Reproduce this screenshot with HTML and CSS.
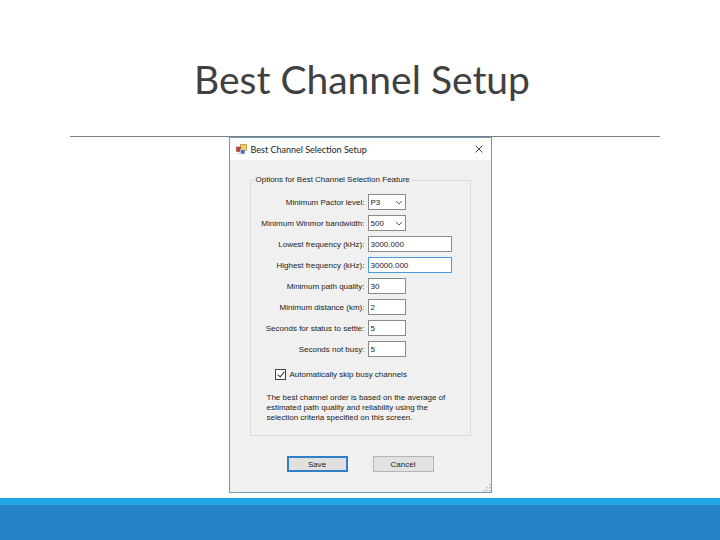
FILE: index.html
```html
<!DOCTYPE html>
<html lang="en">
<head>
  <meta charset="UTF-8" />
  <meta name="viewport" content="width=device-width, initial-scale=1.0"/>
  <title>Best Channel Setup</title>
  <link rel="stylesheet" href="styles.css">
</head>
<body>

  <header class="slide-header">
    <h1>Best Channel Setup</h1>
  </header>

  <main class="slide-body">
    <section class="window">
      <div class="title-bar">
        <svg class="app-icon" viewBox="0 0 11 11" width="11" height="11">
          <rect x="4.5" y="0.5" width="6" height="6" fill="#f5cf4c" stroke="#a98a3c" stroke-width="0.7"/>
          <rect x="0.5" y="3" width="4" height="4.5" fill="#c8432f" stroke="#8d4a48" stroke-width="0.6"/>
          <rect x="4.5" y="5.5" width="4.5" height="4.5" fill="#4f6fb5" stroke="#e4e4ee" stroke-width="0.6"/>
          <path d="M1 9.3h3" stroke="#b9b9c4" stroke-width="0.8"/>
        </svg>
        <h2>Best Channel Selection Setup</h2>
        <button type="button" class="close" aria-label="Close">
          <svg viewBox="0 0 8 8" width="8" height="8"><path d="M0.5 0.5l7 7M7.5 0.5l-7 7" stroke="#333" stroke-width="0.9"/></svg>
        </button>
      </div>

      <form class="setup-form">
        <fieldset>
          <legend>Options for Best Channel Selection Feature</legend>

          <div class="fields">
            <label for="pactor">Minimum Pactor level:</label>
            <div class="select-box">
              <select id="pactor"><option>P1</option><option>P2</option><option selected>P3</option><option>P4</option></select>
              <svg class="arrow" viewBox="0 0 8 5" width="8" height="5"><path d="M1 1l3 3 3-3" fill="none" stroke="#555" stroke-width="0.9"/></svg>
            </div>

            <label for="winmor">Minimum Winmor bandwidth:</label>
            <div class="select-box">
              <select id="winmor"><option selected>500</option><option>1600</option></select>
              <svg class="arrow" viewBox="0 0 8 5" width="8" height="5"><path d="M1 1l3 3 3-3" fill="none" stroke="#555" stroke-width="0.9"/></svg>
            </div>

            <label for="lowest">Lowest frequency (kHz):</label>
            <input type="text" id="lowest" class="wide" value="3000.000"/>

            <label for="highest">Highest frequency (kHz):</label>
            <input type="text" id="highest" class="wide active" value="30000.000"/>

            <label for="quality">Minimum path quality:</label>
            <input type="text" id="quality" value="30"/>

            <label for="distance">Minimum distance (km):</label>
            <input type="text" id="distance" value="2"/>

            <label for="settle">Seconds for status to settle:</label>
            <input type="text" id="settle" value="5"/>

            <label for="busy">Seconds not busy:</label>
            <input type="text" id="busy" value="5"/>
          </div>

          <div class="check-row">
            <input type="checkbox" id="skip" checked/>
            <label for="skip">Automatically skip busy channels</label>
          </div>

          <p class="note">The best channel order is based on the average of<br>estimated path quality and reliability using the<br>selection criteria specified on this screen.</p>
        </fieldset>

        <div class="buttons">
          <button type="submit" class="btn primary">Save</button>
          <button type="button" class="btn">Cancel</button>
        </div>
      </form>

      <svg class="grip" viewBox="0 0 8 8" width="8" height="8" fill="#b5bcc0">
        <path d="M6 0h1.5v1.5H6zM6 3h1.5v1.5H6zM6 6h1.5v1.5H6zM3 3h1.5v1.5H3zM3 6h1.5v1.5H3zM0 6h1.5v1.5H0z"/>
      </svg>
    </section>
  </main>

  <footer class="slide-footer"></footer>

</body>
</html>
```

FILE: styles.css
```css
* { box-sizing: border-box; margin: 0; padding: 0; }

body {
  min-height: 100vh;
  display: flex;
  flex-direction: column;
  background: #fff;
  font-family: 'Liberation Sans', Arial, sans-serif;
  font-size: 8px;
  color: #222;
}

/* heading */
.slide-header {
  margin: 0 60px 0 70px;
  padding: 55px 6px 33px 0;
  border-bottom: 1px solid #7f7f7f;
  text-align: center;
}
.slide-header h1 {
  font-family: Lato, Calibri, sans-serif;
  font-size: 39px;
  line-height: 48px;
  font-weight: 400;
  color: #404040;
}

.slide-body { flex: 1; }

/* dialog window */
.window {
  position: relative;
  width: 263px;
  margin: 0 auto;
  background: #f0f0f0;
  border: 1px solid #6d9cba;
}
.title-bar {
  display: flex;
  align-items: center;
  height: 22px;
  padding: 0 8px 0 6px;
  background: #fff;
}
.title-bar h2 {
  flex: 1;
  margin-left: 4px;
  font-family: Lato, 'Segoe UI', sans-serif;
  font-size: 9px;
  font-weight: 400;
}
.close { border: none; background: none; line-height: 0; }

/* form */
.setup-form { padding: 15px 20px 20px; }
fieldset {
  border: 1px solid #dcdcdc;
  padding: 9px 12px 12px 8px;
}
legend { margin-left: -4px; padding: 0 1px; line-height: 10px; }
.fields {
  display: grid;
  grid-template-columns: 106px 1fr;
  column-gap: 3px;
  row-gap: 5px;
  align-items: center;
}
.fields label { text-align: right; white-space: nowrap; }
input[type="text"], select {
  display: block;
  width: 38px;
  height: 16px;
  padding: 0 2px;
  border: 1px solid #8a8a8a;
  border-radius: 0;
  background: #fff;
  font: inherit;
  color: #222;
}
input[type="text"].wide { width: 84px; }
input[type="text"].active { border-color: #4a9ae0; }
select { appearance: none; }
.select-box { position: relative; width: 38px; }
.arrow { position: absolute; right: 3px; top: 6px; pointer-events: none; }

.check-row {
  display: flex;
  align-items: center;
  gap: 4px;
  margin: 12px 0 0 16px;
}
.check-row input {
  appearance: none;
  width: 11px;
  height: 11px;
  border: 1px solid #444;
  background: #fff;
  position: relative;
}
.check-row input:checked::after {
  content: '';
  position: absolute;
  left: 3px;
  top: 0;
  width: 3px;
  height: 6px;
  border: solid #333;
  border-width: 0 1px 1px 0;
  transform: rotate(40deg);
}
.note { margin: 13px 0 0 8px; line-height: 10px; white-space: nowrap; }

/* buttons */
.buttons { display: flex; gap: 25px; padding: 20px 0 0 37px; }
.btn {
  width: 61px;
  height: 16px;
  border: 1px solid #b5b5b5;
  background: #e1e1e1;
  font: inherit;
  color: #222;
}
.btn.primary { border: 2px solid #2f7fc6; }
.grip { position: absolute; right: 0; bottom: 0; }

/* bottom band */
.slide-footer {
  height: 42px;
  border-top: 7px solid #22a8e3;
  background: #2683c6;
}
```
